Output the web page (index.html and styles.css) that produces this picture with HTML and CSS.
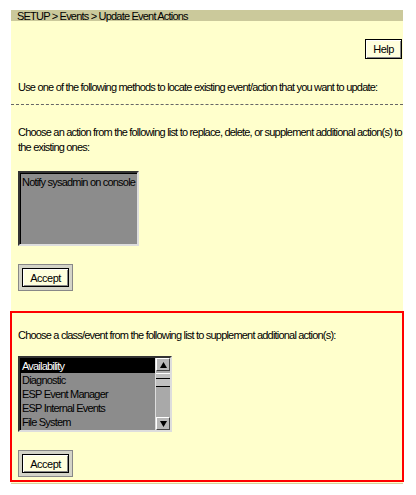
FILE: index.html
```html
<!DOCTYPE html>
<html>
<head>
<meta charset="utf-8">
<link rel="stylesheet" href="styles.css">
</head>
<body>
<div class="panel">
  <div class="crumb">SETUP &gt; Events &gt; Update Event Actions</div>
  <div class="toolbar"><button class="btn help">Help</button></div>
  <p class="intro">Use one of the following methods to locate existing event/action that you want to update:</p>
  <div class="dashes"></div>
  <section class="method">
    <p class="label">Choose an action from the following list to replace, delete, or supplement additional action(s) to<br>the existing ones:</p>
    <div class="listbox actions">
      <div class="item">Notify sysadmin on console</div>
    </div>
    <div class="defbtn"><button class="btn">Accept</button></div>
  </section>
  <section class="method highlight">
    <p class="label">Choose a class/event from the following list to supplement additional action(s):</p>
    <div class="listbox classes">
      <div class="items">
        <div class="item sel">Availability</div>
        <div class="item">Diagnostic</div>
        <div class="item">ESP Event Manager</div>
        <div class="item">ESP Internal Events</div>
        <div class="item">File System</div>
      </div>
      <div class="scroll">
        <div class="arrow up"><svg width="9" height="8" viewBox="0 0 9 8"><path d="M4.5 1 L8 7 L1 7 Z" fill="#000"/></svg></div>
        <div class="track">
          <div class="thumb"></div>
        </div>
        <div class="arrow down"><svg width="9" height="8" viewBox="0 0 9 8"><path d="M1 1 L8 1 L4.5 7 Z" fill="#000"/></svg></div>
      </div>
    </div>
    <div class="defbtn"><button class="btn">Accept</button></div>
  </section>
</div>
</body>
</html>
```
FILE: styles.css
```css
html, body {
  margin: 0;
  padding: 0;
  background: #ffffff;
}
body {
  font-family: "Liberation Sans", Arial, sans-serif;
  font-size: 11px;
  letter-spacing: -0.8px;
  color: #000;
}
.panel {
  margin: 10px 0 0 11px;
  width: 392px;
  background: #ffffcc;
  padding-bottom: 1px;
  border-bottom: 1px solid #d8cfa0;
}
.crumb {
  height: 11px;
  line-height: 12px;
  background: #cbc99b;
  padding-left: 6px;
  white-space: nowrap;
}
.toolbar {
  display: flex;
  justify-content: flex-end;
  padding: 18px 1px 0 0;
}
.btn {
  font-family: inherit;
  font-size: 11px;
  letter-spacing: -0.5px;
  background: #ffffdd;
  border: 1px solid #000;
  box-shadow: inset 1px 1px 0 #ffffff, inset -1px -1px 0 #888;
  padding: 0;
  margin: 0;
  color: #000;
}
.help {
  width: 37px;
  height: 20px;
}
.intro {
  margin: 0;
  padding: 21px 0 0 7px;
  line-height: 15px;
  white-space: nowrap;
}
.dashes {
  margin-top: 9px;
  height: 0;
  border-top: 1px dashed #666;
}
.method {
  padding: 20px 0 0 7px;
}
.label {
  margin: 0;
  line-height: 15px;
  white-space: nowrap;
}
.listbox {
  background: #8c8c8c;
  border: 2px solid;
  border-color: #333 #ddd #ddd #333;
  box-shadow: inset 1px 1px 0 #000;
}
.actions {
  margin-top: 16px;
  width: 117px;
  height: 71px;
}
.actions .item {
  padding: 3px 0 0 2px;
  white-space: nowrap;
}
.defbtn {
  display: inline-flex;
  margin-top: 18px;
  padding: 3px;
  background: #d4d4c8;
  border: 1px solid #888;
}
.defbtn .btn {
  width: 47px;
  height: 19px;
}
.highlight {
  margin: 20px -1px 0 -1px;
  border: 2px solid #ff0000;
  padding: 15px 0 3px 6px;
}
.classes {
  margin-top: 13px;
  width: 154px;
  height: 76px;
  display: flex;
  box-sizing: border-box;
}
.items {
  flex: 1;
  padding-top: 1px;
}
.classes .item {
  height: 14px;
  line-height: 14px;
  padding-left: 2px;
  white-space: nowrap;
}
.classes .item.sel {
  background: #000;
  color: #fff;
}
.scroll {
  width: 14px;
  display: flex;
  flex-direction: column;
  background: #a9a9a9;
  border-left: 1px solid #ddd;
}
.arrow {
  height: 13px;
  display: flex;
  align-items: center;
  justify-content: center;
  background: #b8b8b8;
  border: 1px solid;
  border-color: #fff #444 #444 #fff;
  box-sizing: border-box;
}
.track {
  flex: 1;
  padding-top: 2px;
}
.thumb {
  height: 12px;
  background: #c0c0c0;
  border-top: 1px solid #fff;
  border-bottom: 1px solid #000;
  box-shadow: inset 0 4px 0 #c0c0c0, inset 0 5px 0 #000;
}
```
